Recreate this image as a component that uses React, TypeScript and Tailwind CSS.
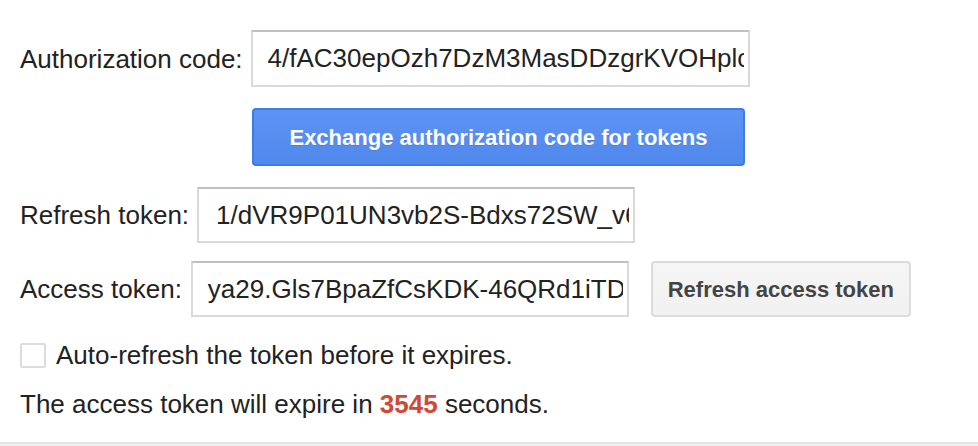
export default function App() {
  const font = { fontFamily: '"Liberation Sans", Arial, sans-serif' };

  return (
    <div className="w-[978px] h-[446px] bg-white flex flex-col text-[#222]" style={font}>
      <div className="flex-1 pl-5 pt-[30px]">
        <div className="flex items-center gap-2">
          <label className="text-[26px] leading-[30px]">Authorization code:</label>
          <input
            readOnly
            value="4/fAC30epOzh7DzM3MasDDzgrKVOHplcWf0cyWqKV3Yk8"
            className="w-[499px] h-[57px] border-2 border-[#d9d9d9] border-t-[#c0c0c0] pl-[15px] pr-1 text-[26px] text-[#222] outline-none bg-white"
          />
        </div>

        <button className="mt-[21px] ml-[232px] w-[493px] h-[58px] rounded-[4px] border-2 border-[#3f7be8] bg-gradient-to-b from-[#5d93f3] to-[#5088ec] text-white font-bold text-[22px] [text-shadow:0_1px_0_rgba(0,0,0,0.1)]">
          Exchange authorization code for tokens
        </button>

        <div className="mt-[21px] flex items-center gap-2">
          <label className="text-[26px] leading-[30px]">Refresh token:</label>
          <input
            readOnly
            value="1/dVR9P01UN3vb2S-Bdxs72SW_v6x1mZQk"
            className="w-[438px] h-[56px] border-2 border-[#d9d9d9] border-t-[#c0c0c0] pl-[17px] pr-1 text-[26px] text-[#222] outline-none bg-white"
          />
        </div>

        <div className="mt-[18px] flex items-center">
          <label className="text-[26px] leading-[30px] mr-[9px]">Access token:</label>
          <input
            readOnly
            value="ya29.Gls7BpaZfCsKDK-46QRd1iTDYzq"
            className="w-[438px] h-[56px] border-2 border-[#d9d9d9] border-t-[#c0c0c0] pl-[15px] pr-1 text-[26px] text-[#222] outline-none bg-white"
          />
          <button className="ml-[22px] w-[260px] h-[56px] rounded-[4px] border-2 border-[#dcdcdc] bg-gradient-to-b from-[#f5f5f5] to-[#f1f1f1] text-[#444] font-bold text-[22px]">
            Refresh access token
          </button>
        </div>

        <label className="mt-[23px] flex items-center h-[30px]">
          <span className="w-[26px] h-[25px] border-2 border-[#dcdcdc] rounded-[2px] bg-white" />
          <span className="ml-[10px] text-[26px] leading-[30px]">Auto-refresh the token before it expires.</span>
        </label>

        <p className="mt-[19px] text-[26px] leading-[30px]">
          The access token will expire in <span className="font-bold text-[#d14836]">3545</span> seconds.
        </p>
      </div>
      <div className="h-[4px] border-t-2 border-[#e5e5e5] bg-[#f1f1f1]" />
    </div>
  );
}
